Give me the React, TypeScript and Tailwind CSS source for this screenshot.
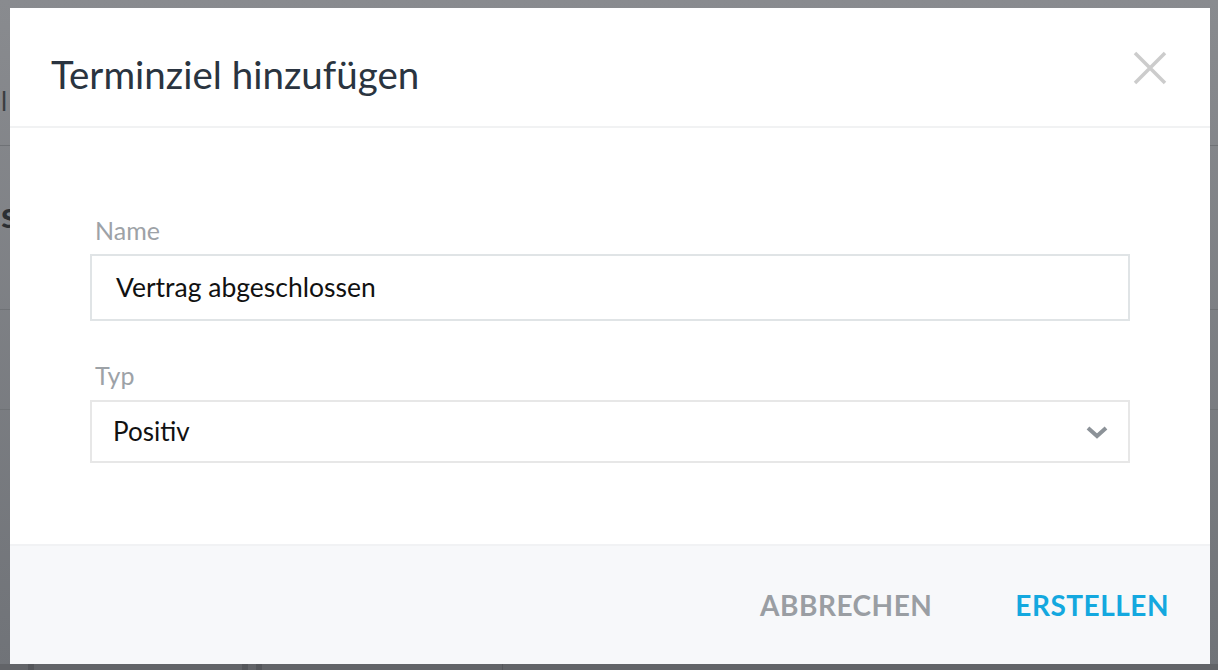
import React from "react";

function CloseIcon() {
  return (
    <svg width="34" height="34" viewBox="0 0 34 34" fill="none">
      <path d="M2 2 L32 32 M32 2 L2 32" stroke="#cccccc" strokeWidth="3.5" />
    </svg>
  );
}

function Chevron() {
  return (
    <svg width="22" height="14" viewBox="0 0 22 14" fill="none">
      <path d="M2 3 L11 11 L20 3" stroke="#8c9298" strokeWidth="4" />
    </svg>
  );
}

export default function App() {
  return (
    <div
      className="relative h-[670px] w-full overflow-hidden bg-gradient-to-b from-[#898b8f] to-[#707378]"
      style={{ fontFamily: "Lato, 'Open Sans', sans-serif" }}
    >
      {/* page behind the backdrop */}
      <div className="flex h-full flex-col">
        <div className="h-[146px] border-b border-[#6f7276] pt-[82px] text-[26px] text-[#3a3d40]">
          <span className="ml-[1px]">l</span>
        </div>
        <div className="h-[164px] border-b border-[#6f7276] pt-[50px] text-[36px] font-bold leading-none text-[#2c2f33]">
          <span className="ml-[1px]">s</span>
        </div>
        <div className="h-[100px] border-b border-[#6f7276]" />
        <div className="flex-1" />
        <div className="flex h-[6px] bg-[#626468]">
          <div className="ml-[28px] w-[6px] bg-[#55575b]" />
          <div className="ml-[208px] w-[6px] bg-[#55575b]" />
          <div className="ml-[8px] w-[6px] bg-[#55575b]" />
          <div className="ml-[240px] w-[1px] bg-[#55575b]" />
        </div>
      </div>

      {/* modal */}
      <div className="absolute left-[10px] top-[8px] flex h-[656px] w-[1200px] flex-col bg-white">
        <div className="flex h-[120px] items-center justify-between border-b-2 border-[#f1f2f3] pl-[41px] pr-[43px]">
          <h2 className="pt-[16px] text-[38.5px] text-[#2a3440]">Terminziel hinzufügen</h2>
          <div className="pt-[2px]">
            <CloseIcon />
          </div>
        </div>

        <div className="flex flex-1 flex-col px-[80px] pt-[86px]">
          <label className="pl-[5px] text-[25px] leading-[32px] text-[#9da2a7]">Name</label>
          <div className="mt-[8px] flex h-[67px] items-center border-2 border-[#e0e4e6] pl-[24px] text-[26.5px] text-[#111]">
            Vertrag abgeschlossen
          </div>
          <label className="mt-[38px] pl-[5px] text-[25px] leading-[32px] text-[#9da2a7]">Typ</label>
          <div className="mt-[9px] flex h-[63px] items-center justify-between border-2 border-[#e7e7e7] pl-[21px] pr-[20px] text-[26px] text-[#111]">
            <span>Positiv</span>
            <Chevron />
          </div>
        </div>

        <div className="flex h-[120px] items-center justify-end gap-[83px] border-t-2 border-[#f1f2f4] bg-[#f7f8fa] pr-[41px]">
          <button className="text-[28px] font-bold tracking-[0.5px] text-[#9a9ea3]">ABBRECHEN</button>
          <button className="text-[28px] font-bold tracking-[0.5px] text-[#14a8df]">ERSTELLEN</button>
        </div>
      </div>
    </div>
  );
}
